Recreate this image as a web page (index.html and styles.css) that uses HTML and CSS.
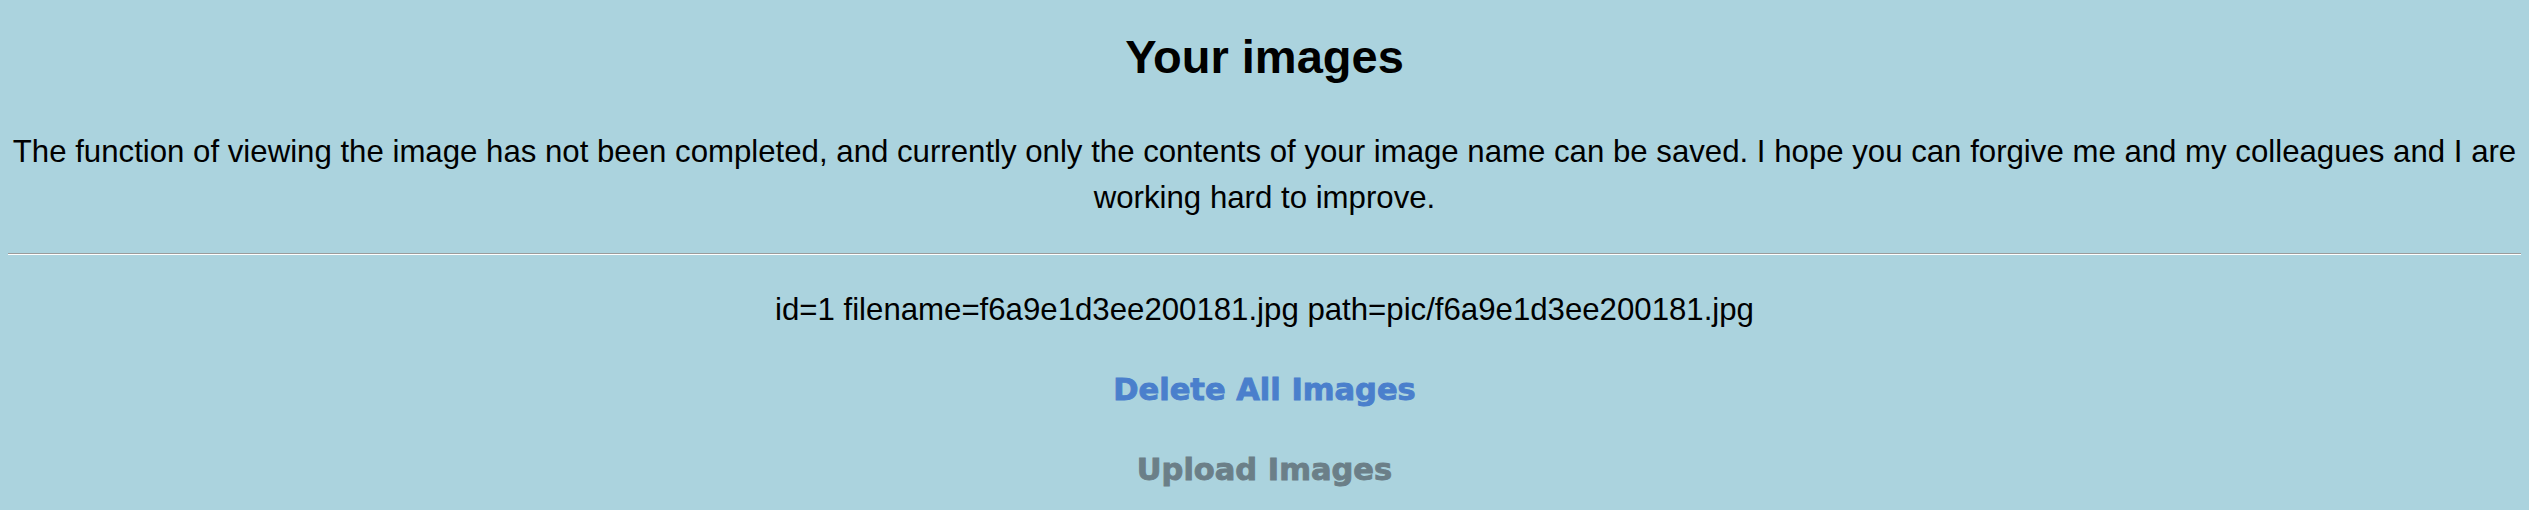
FILE: index.html
```html
<!DOCTYPE html>
<html lang="en">
<head>
<meta charset="utf-8">
<title>Your images</title>
<link rel="stylesheet" href="styles.css">
</head>
<body>
<main class="page">
  <h1 class="title">Your images</h1>
  <p class="notice">The function of viewing the image has not been completed, and currently only the contents of your image name can be saved. I hope you can forgive me and my colleagues and I are working hard to improve.</p>
  <hr class="divider">
  <p class="record">id=1 filename=f6a9e1d3ee200181.jpg path=pic/f6a9e1d3ee200181.jpg</p>
  <a class="action action-delete" href="#">Delete All Images</a>
  <a class="action action-upload" href="#">Upload Images</a>
</main>
</body>
</html>
```
FILE: styles.css
```css
html, body {
  margin: 0;
  padding: 0;
}

body {
  background: #abd3de;
  color: #000;
  font-family: "Liberation Sans", Arial, sans-serif;
}

.page {
  padding: 0 8px;
  text-align: center;
  display: flex;
  flex-direction: column;
  align-items: stretch;
}

.title {
  margin: 30px 0 0;
  font-size: 47px;
  line-height: 53px;
  font-weight: bold;
}

.notice {
  margin: 46px 0 0;
  font-size: 31.2px;
  line-height: 46px;
}

.divider {
  margin: 32px 0 0;
  height: 0;
  border: 0;
  border-top: 1px solid #9b9b9b;
  border-bottom: 1px solid #ffffff;
}

.record {
  margin: 32px 0 0;
  font-size: 31.2px;
  line-height: 46px;
}

.action {
  align-self: center;
  margin-top: 34px;
  font-family: "DejaVu Sans", "Liberation Sans", sans-serif;
  font-weight: bold;
  font-size: 30.5px;
  line-height: 46px;
  text-decoration: none;
  -webkit-text-stroke: 0.9px currentColor;
}

.action-delete {
  color: #4a7fcc;
}

.action-upload {
  color: #6b7f88;
}
```
